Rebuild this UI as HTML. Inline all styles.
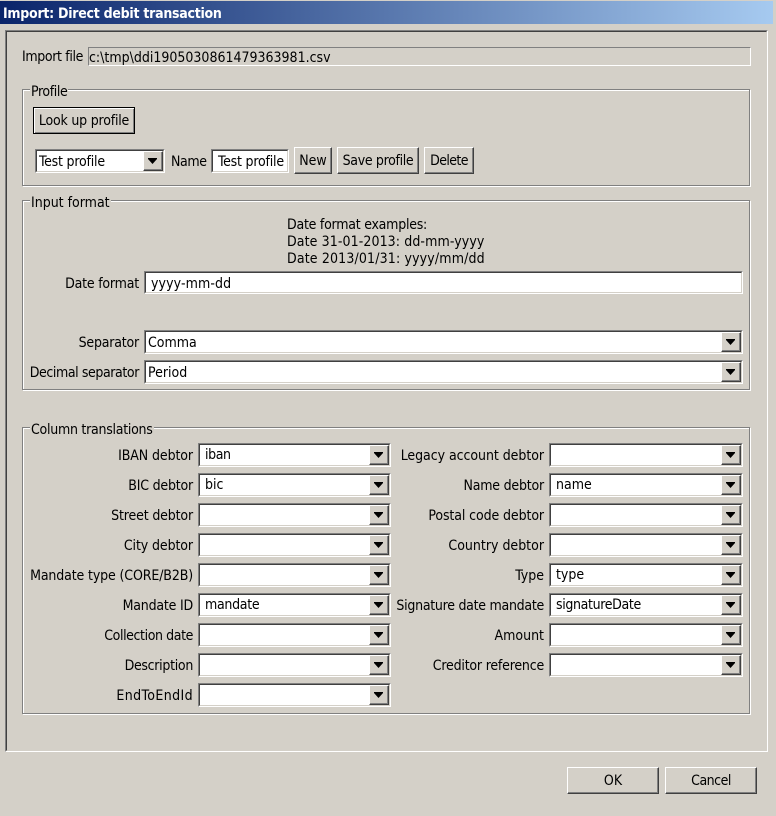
<!DOCTYPE html>
<html><head><meta charset="utf-8"><title>Import</title>
<style>
html,body{margin:0;padding:0;background:#d4d0c8}
#r{position:relative;width:776px;height:816px;overflow:hidden;background:#d4d0c8;font-family:"DejaVu Sans Condensed","DejaVu Sans",sans-serif;font-stretch:condensed;font-size:14px;line-height:22px;color:#000}
#r div{position:absolute;box-sizing:border-box;white-space:nowrap}
.tb{left:0;top:1px;width:773px;height:23px;background:linear-gradient(90deg,#0a246a,#a6caf0);color:#fff;font-weight:bold;font-size:14px;line-height:26px;padding-left:3px;letter-spacing:-.26px}
.g{border:1px solid #808080;box-shadow:1px 1px 0 #fff,inset 1px 1px 0 #fff}
.gt{background:#d4d0c8;padding:0 1px;height:20px}
.l{text-align:right;height:20px}
.c{border:1px solid;border-color:#808080 #fff #fff #808080;height:24px}
.i{left:0;top:0;right:0;bottom:0;border:1px solid;border-color:#404040 #d4d0c8 #d4d0c8 #404040;background:#fff;padding-left:5px;line-height:22px}
.v{line-height:20px}
.b{top:0;right:0;width:20px;height:20px;background:#d4d0c8;border:1px solid;border-color:#fff #404040 #404040 #fff;box-shadow:inset -1px -1px 0 #808080}
.b:after{content:"";position:absolute;left:4px;top:6px;width:9px;height:6px;background:#000;clip-path:polygon(0 0,100% 0,100% 1px,50% 100%,0 1px)}
.btn{background:#d4d0c8;border:1px solid;border-color:#fff #404040 #404040 #fff;box-shadow:inset -1px -1px 0 #808080;text-align:center;line-height:27px}
</style></head><body><div id="r">
<div style="left:0;top:0;width:776px;height:1px;background:#d4d0c8"></div>
<div class="tb">Import: Direct debit transaction</div>
<div style="left:5px;top:30px;width:763px;height:722px;border:1px solid;border-color:#808080 #fff #fff #808080"></div>
<div style="left:6px;top:31px;width:761px;height:720px;border:1px solid;border-color:#404040 #d4d0c8 #d4d0c8 #404040"></div>

<div style="left:22px;top:46px;letter-spacing:-.36px">Import file</div>
<div style="left:88px;top:47px;width:663px;height:19px;border:1px solid;border-color:#808080 #fff #fff #808080;line-height:21px">c:\tmp\ddi1905030861479363981.csv</div>

<div class="g" style="left:22px;top:89px;width:728px;height:97px"></div>
<div class="gt" style="left:30px;top:81px;letter-spacing:-.4px">Profile</div>
<div class="btn" style="left:33px;top:107px;width:102px;height:27px;border:1px solid #000;box-shadow:inset 1px 1px 0 #fff,inset -1px -1px 0 #808080;line-height:27px;letter-spacing:-.2px">Look up profile</div>
<div class="c" style="left:35px;top:149px;width:130px"><div class="i" style="padding-left:2px;letter-spacing:-.2px">Test profile<div class="b"></div></div></div>
<div style="left:171px;top:151px;letter-spacing:-.4px">Name</div>
<div class="c" style="left:211px;top:149px;width:78px"><div class="i" style="letter-spacing:-.2px">Test profile</div></div>
<div class="btn" style="left:294px;top:147px;width:38px;height:27px">New</div>
<div class="btn" style="left:337px;top:147px;width:82px;height:27px;letter-spacing:-.33px">Save profile</div>
<div class="btn" style="left:424px;top:147px;width:50px;height:27px;letter-spacing:-.6px">Delete</div>

<div class="g" style="left:22px;top:200px;width:728px;height:190px"></div>
<div class="gt" style="left:30px;top:192px">Input format</div>
<div style="left:287px;top:215px;line-height:20px;letter-spacing:-.24px">Date format examples:</div>
<div style="left:287px;top:232px;line-height:20px;letter-spacing:.1px">Date 31-01-2013: dd-mm-yyyy</div>
<div style="left:287px;top:249px;line-height:20px;letter-spacing:.15px">Date 2013/01/31: yyyy/mm/dd</div>
<div class="l" style="left:0;width:139px;top:273px;letter-spacing:-.2px">Date format</div>
<div class="c" style="left:144px;top:271px;width:599px;height:23px"><div class="i" style="letter-spacing:.1px">yyyy-mm-dd</div></div>
<div class="l" style="left:0;width:139px;top:332px;letter-spacing:-.2px">Separator</div>
<div class="c" style="left:144px;top:330px;width:599px"><div class="i" style="padding-left:2px">Comma<div class="b"></div></div></div>
<div class="l" style="left:0;width:139px;top:362px;letter-spacing:-.4px">Decimal separator</div>
<div class="c" style="left:144px;top:360px;width:599px"><div class="i" style="padding-left:2px">Period<div class="b"></div></div></div>

<div class="g" style="left:22px;top:427px;width:728px;height:287px"></div>
<div class="gt" style="left:30px;top:419px;letter-spacing:-.26px">Column translations</div>

<div class="l" style="left:0;width:193px;top:445px;letter-spacing:-.1px">IBAN debtor</div>
<div class="c" style="left:198px;top:443px;width:193px"><div class="i v" style="letter-spacing:-.4px">iban<div class="b"></div></div></div>
<div class="l" style="left:0;width:544px;top:445px;letter-spacing:-.05px">Legacy account debtor</div>
<div class="c" style="left:549px;top:443px;width:194px"><div class="i"><div class="b"></div></div></div>

<div class="l" style="left:0;width:193px;top:475px;letter-spacing:-.2px">BIC debtor</div>
<div class="c" style="left:198px;top:473px;width:193px"><div class="i v">bic<div class="b"></div></div></div>
<div class="l" style="left:0;width:544px;top:475px;letter-spacing:-.2px">Name debtor</div>
<div class="c" style="left:549px;top:473px;width:194px"><div class="i v">name<div class="b"></div></div></div>

<div class="l" style="left:0;width:193px;top:505px;letter-spacing:-.15px">Street debtor</div>
<div class="c" style="left:198px;top:503px;width:193px"><div class="i"><div class="b"></div></div></div>
<div class="l" style="left:0;width:544px;top:505px;letter-spacing:-.1px">Postal code debtor</div>
<div class="c" style="left:549px;top:503px;width:194px"><div class="i"><div class="b"></div></div></div>

<div class="l" style="left:0;width:193px;top:535px;letter-spacing:-.1px">City debtor</div>
<div class="c" style="left:198px;top:533px;width:193px"><div class="i"><div class="b"></div></div></div>
<div class="l" style="left:0;width:544px;top:535px">Country debtor</div>
<div class="c" style="left:549px;top:533px;width:194px"><div class="i"><div class="b"></div></div></div>

<div class="l" style="left:0;width:193px;top:565px;letter-spacing:-.13px">Mandate type (CORE/B2B)</div>
<div class="c" style="left:198px;top:563px;width:193px"><div class="i"><div class="b"></div></div></div>
<div class="l" style="left:0;width:544px;top:565px">Type</div>
<div class="c" style="left:549px;top:563px;width:194px"><div class="i v">type<div class="b"></div></div></div>

<div class="l" style="left:0;width:193px;top:595px;letter-spacing:-.2px">Mandate ID</div>
<div class="c" style="left:198px;top:593px;width:193px"><div class="i v" style="letter-spacing:-.3px">mandate<div class="b"></div></div></div>
<div class="l" style="left:0;width:544px;top:595px;letter-spacing:-.27px">Signature date mandate</div>
<div class="c" style="left:549px;top:593px;width:194px"><div class="i v" style="letter-spacing:-.35px">signatureDate<div class="b"></div></div></div>

<div class="l" style="left:0;width:193px;top:625px;letter-spacing:-.4px">Collection date</div>
<div class="c" style="left:198px;top:623px;width:193px"><div class="i"><div class="b"></div></div></div>
<div class="l" style="left:0;width:544px;top:625px">Amount</div>
<div class="c" style="left:549px;top:623px;width:194px"><div class="i"><div class="b"></div></div></div>

<div class="l" style="left:0;width:193px;top:655px;letter-spacing:-.3px">Description</div>
<div class="c" style="left:198px;top:653px;width:193px"><div class="i"><div class="b"></div></div></div>
<div class="l" style="left:0;width:544px;top:655px;letter-spacing:-.2px">Creditor reference</div>
<div class="c" style="left:549px;top:653px;width:194px"><div class="i"><div class="b"></div></div></div>

<div class="l" style="left:0;width:193px;top:685px;letter-spacing:.4px">EndToEndId</div>
<div class="c" style="left:198px;top:683px;width:193px"><div class="i"><div class="b"></div></div></div>

<div class="btn" style="left:567px;top:767px;width:92px;height:27px">OK</div>
<div class="btn" style="left:665px;top:767px;width:92px;height:27px;letter-spacing:-.5px">Cancel</div>
</div></body></html>
